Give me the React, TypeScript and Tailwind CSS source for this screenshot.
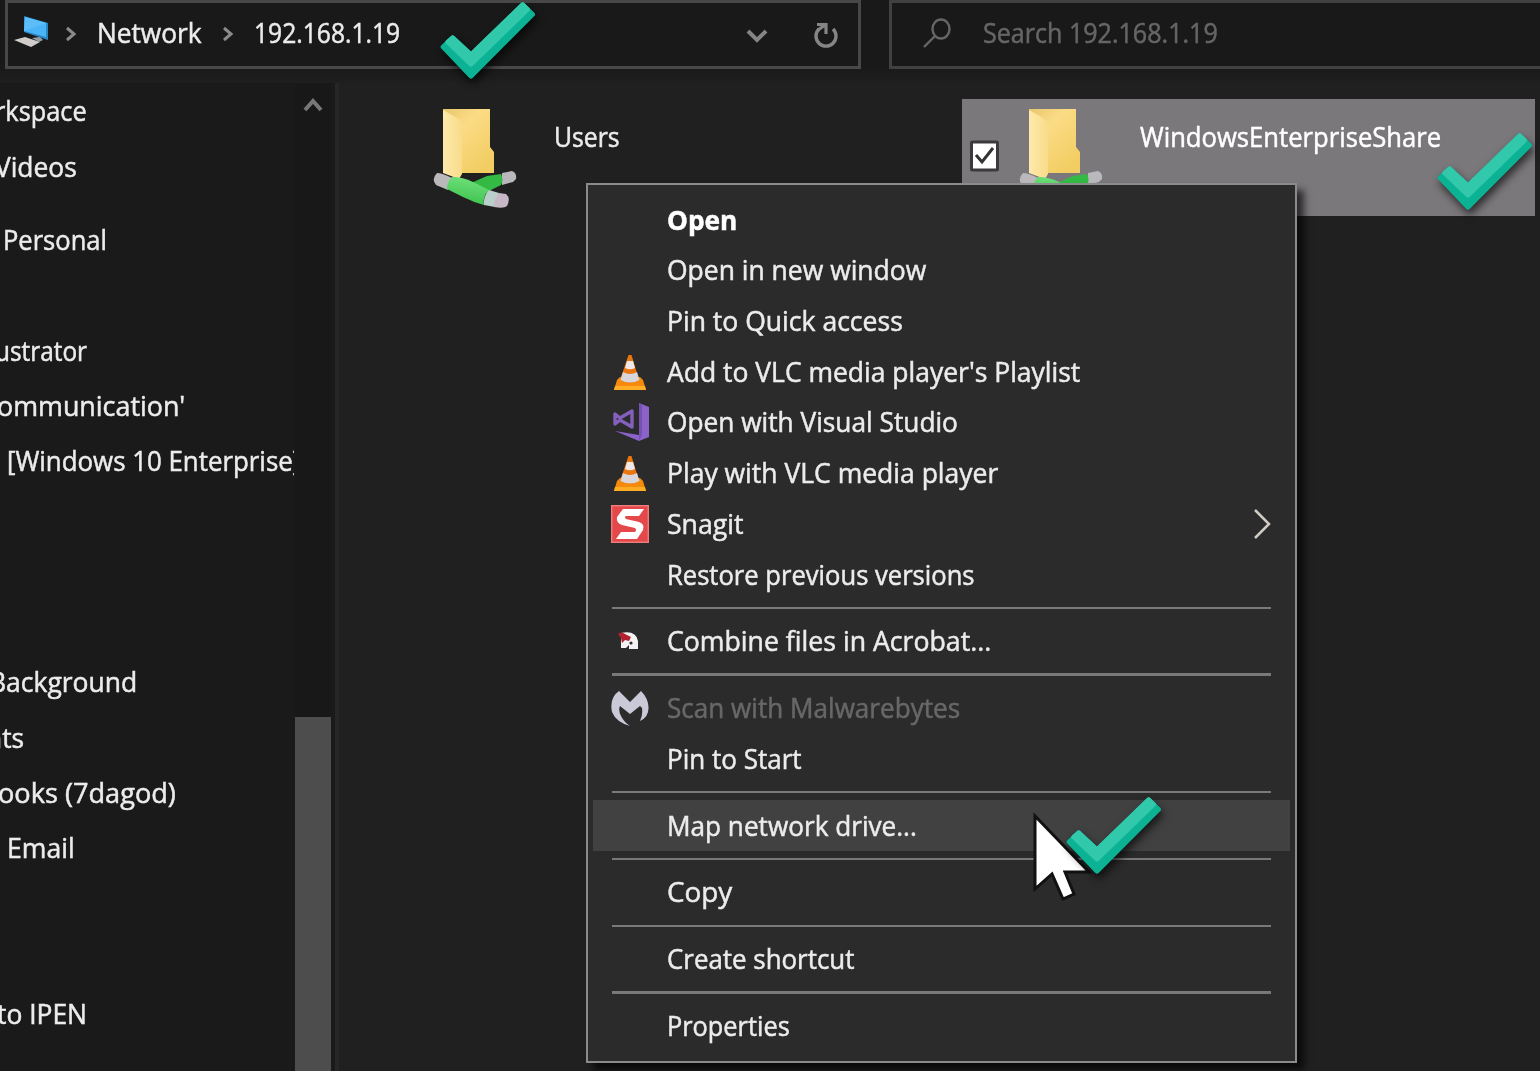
import { useId, useLayoutEffect, useRef, useState, type ReactNode } from "react";

/* Condenses a line of text horizontally so that it fills the given width. */
function Fit({ w, className = "", children }: { w: number; className?: string; children: ReactNode }) {
  const ref = useRef<HTMLSpanElement>(null);
  const [scale, setScale] = useState(1);
  useLayoutEffect(() => {
    if (ref.current) setScale(w / ref.current.offsetWidth);
  }, [w]);
  return (
    <span className={`block shrink-0 ${className}`} style={{ width: w }}>
      <span ref={ref} className="inline-block origin-left whitespace-pre" style={{ transform: `scaleX(${scale})` }}>
        {children}
      </span>
    </span>
  );
}

function CheckMark({ className }: { className: string }) {
  return (
    <svg viewBox="54 0 300 246" className={`absolute h-[82px] w-[100px] overflow-visible drop-shadow-[2px_5px_4px_rgba(0,0,0,0.65)] ${className}`}>
      <path d="M69 141 98 113 153 164 308 14 338 43 153 229Z" fill="#0cb294" stroke="#0cb294" strokeWidth="14" strokeLinejoin="round" />
      <path d="M83 126 98 113 153 164 308 14 323 28 153 193Z" fill="#31c8ab" stroke="#31c8ab" strokeWidth="14" strokeLinejoin="round" />
    </svg>
  );
}

function FolderIcon() {
  const id = useId();
  return (
    <svg viewBox="0 0 84 102" className="h-[102px] w-[84px] shrink-0">
      <defs>
        <linearGradient id={`${id}b`} x1="0" y1="0" x2="0.7" y2="1">
          <stop offset="0" stopColor="#e8c56c" />
          <stop offset="0.35" stopColor="#fbdc86" />
          <stop offset="1" stopColor="#f2cd62" />
        </linearGradient>
        <linearGradient id={`${id}f`} x1="0" y1="0" x2="1" y2="0">
          <stop offset="0" stopColor="#ffe9ab" />
          <stop offset="1" stopColor="#f8dc8a" />
        </linearGradient>
        <linearGradient id={`${id}g`} x1="0.6" y1="0" x2="0.4" y2="1">
          <stop offset="0" stopColor="#6fe07a" />
          <stop offset="1" stopColor="#3cc24d" />
        </linearGradient>
      </defs>
      <path d="M10 1H57V39L61 44V65H26L10 60Z" fill={`url(#${id}b)`} />
      <path d="M10 2 24 10Q29 13 29 18V66L26 71 10 65Z" fill={`url(#${id}f)`} />
      <path d="M69 65 79 63Q84 65 83 71L80 74 69 77Z" fill="#b9b8bc" />
      <path d="M38 75 54 68 68 66Q71 72 68 77L50 86Z" fill="#35b945" />
      <path d="M4 65Q9 65 19 70L15 82 3 77Q-2 71 4 65Z" fill="#bab8bb" />
      <path d="M19 69Q30 69 40 74L56 82Q49 89 51 97Q40 94 30 89L14 81Q14 74 19 69Z" fill={`url(#${id}g)`} />
      <path d="M56 82 66 85 62 99 51 97Q50 88 56 82Z" fill="#b8cfca" />
      <path d="M66 85 73 86Q78 90 74 98Q71 101 61 99Q61 90 66 85Z" fill="#c6b9c5" />
    </svg>
  );
}

function Cone() {
  return (
    <svg viewBox="0 0 36 38" className="h-[38px] w-9">
      <path d="M5 27 8 24H28L31 27 34 37H2Z" fill="#f58a0c" />
      <path d="M3 33H33L34 37H2Z" fill="#ffad25" />
      <path d="M16.500 2H19.500L27 27Q18 33 8 27Z" fill="#ea760d" />
      <path d="M15 8H21L23 15Q18 17.500 13 15Z" fill="#f0e9e8" />
      <path d="M11 19Q18 23 25 19L27.500 27Q18 32 8.500 27Z" fill="#d9d6db" />
    </svg>
  );
}

function VisualStudio() {
  return (
    <svg viewBox="0 0 38 40" className="h-10 w-[38px]">
      <path d="M28 1 38 5V35L28 39 4 29 28 33Z" fill="#8a62c8" />
      <path d="M28 1 31 3V33L28 39Z" fill="#7650b5" />
      <path d="M4 12 9 16 21 9V25L9 18 4 22Z" fill="none" stroke="#8460bd" strokeWidth="3.4" strokeLinejoin="round" />
    </svg>
  );
}

function SnagitIcon() {
  return (
    <svg viewBox="0 0 38 38" className="h-[38px] w-[38px]">
      <rect width="38" height="38" fill="#e5484a" />
      <rect x="0.7" y="0.7" width="36.6" height="36.6" fill="none" stroke="#ee7d7b" strokeWidth="1.4" />
      <path d="M12 4H33L28 11H15Q13 12 15 14L28 17Q34 19 32 25L26 34H5L10 27H24Q26 25 24 23L11 20Q5 18 6 12Z" fill="#fff" />
    </svg>
  );
}

function AcrobatIcon() {
  return (
    <svg viewBox="0 0 22 20" className="mr-[4px] h-5 w-[22px]">
      <path d="M4 2Q19 -1 21 10V18H12V14L9 17H4Z" fill="#f4f2f3" />
      <path d="M1 3Q4 0 8 3L14 6 12 10 8 9 5 12 4 7Z" fill="#b3202f" />
      <circle cx="14" cy="12" r="1.6" fill="#302c2e" />
    </svg>
  );
}

function Malwarebytes() {
  return (
    <svg viewBox="0 0 38 36" className="h-9 w-[38px]">
      <path d="M8 1 19 12 30 1Q37 8 37.500 17Q38 27 29 31Q32 25 31 18L29 16 19 24 9 16Q7 20 10 26Q13 32 19 36Q5 32 1 22Q-2 8 8 1Z" fill="#cac9d8" />
    </svg>
  );
}

function ComputerIcon() {
  return (
    <svg viewBox="0 0 36 34" className="h-[34px] w-9 shrink-0">
      <path d="M0 25 11 22 26 27 17 32Z" fill="#cfccca" />
      <path d="M18 23 26 22 29 25 25 27Z" fill="#929da5" />
      <path d="M10 1 34 8V25L10 17Z" fill="#2b87c4" />
      <path d="M11 2 32 8V22L10 16Z" fill="#49b5f7" />
      <path d="M11 2 32 8 10 16Z" fill="#5cbdf9" />
    </svg>
  );
}

type Entry = { label: string; w: number; icon?: ReactNode; bold?: boolean; muted?: boolean; active?: boolean; sub?: boolean };

const groups: Entry[][] = [
  [
    { label: "Open", w: 70, bold: true },
    { label: "Open in new window", w: 259 },
    { label: "Pin to Quick access", w: 236 },
    { label: "Add to VLC media player's Playlist", w: 413, icon: <Cone /> },
    { label: "Open with Visual Studio", w: 291, icon: <VisualStudio /> },
    { label: "Play with VLC media player", w: 331, icon: <Cone /> },
    { label: "Snagit", w: 76, icon: <SnagitIcon />, sub: true },
    { label: "Restore previous versions", w: 308 },
  ],
  [{ label: "Combine files in Acrobat...", w: 324, icon: <AcrobatIcon /> }],
  [
    { label: "Scan with Malwarebytes", w: 293, icon: <Malwarebytes />, muted: true },
    { label: "Pin to Start", w: 135 },
  ],
  [{ label: "Map network drive...", w: 250, active: true }],
  [{ label: "Copy", w: 65 }],
  [{ label: "Create shortcut", w: 187 }],
  [{ label: "Properties", w: 123 }],
];

function ContextMenu() {
  return (
    <div className="absolute left-[586px] top-[183px] h-[880px] w-[711px] border-2 border-[#8b8b8b] bg-[#2b2b2b] px-[5px] pt-[9.4px] shadow-[7px_7px_7px_rgba(0,0,0,0.65)]">
      {groups.map((group, g) => (
        <div key={g}>
          {g > 0 && (
            <div className="flex h-[16.1px] items-center px-[19px]">
              <div className="h-[2.5px] w-full bg-[#797979]" />
            </div>
          )}
          {group.map((e) => (
            <div key={e.label} className={`flex h-[50.7px] items-center ${e.active ? "bg-[#414141]" : ""}`}>
              <div className="flex w-[74px] shrink-0 justify-center">{e.icon}</div>
              <Fit w={e.w} className={e.bold ? "font-bold text-white" : e.muted ? "text-[#686868]" : ""}>
                {e.label}
              </Fit>
              {e.sub && (
                <svg viewBox="0 0 20 32" className="ml-auto mr-[17px] h-8 w-5">
                  <path d="M2 2 16 16 2 30" fill="none" stroke="#d0cdc4" strokeWidth="2.5" />
                </svg>
              )}
            </div>
          ))}
        </div>
      ))}
    </div>
  );
}

/* Tree rows; x is the start of the text, which may be scrolled past the left edge. */
const tree: { label?: string; x?: number; w?: number; gap?: boolean }[] = [
  { label: "rkspace", x: -5, w: 92 },
  { label: "Videos", x: -5, w: 82, gap: true },
  { label: "Personal", x: 3, w: 104 },
  {},
  { label: "ustrator", x: -5, w: 92 },
  { label: "ommunication'", x: -3, w: 188 },
  { label: "[Windows 10 Enterprise]", x: 7, w: 294 },
  {},
  {},
  {},
  { label: "Background", x: -11, w: 148 },
  { label: "nts", x: -14, w: 38 },
  { label: "ooks (7dagod)", x: -2, w: 178 },
  { label: "Email", x: 7, w: 68 },
  {},
  {},
  { label: "to IPEN", x: -3, w: 90 },
];

function Sidebar() {
  return (
    <aside className="flex w-[339px] shrink-0 bg-[#1a1a1a]">
      <div className="w-[294px] shrink-0 overflow-hidden pt-[0.7px]">
        {tree.map((r, i) => (
          <div key={i} className={`flex h-[55.3px] items-center ${r.gap ? "mb-[18px]" : ""}`}>
            {r.label && (
              <div style={{ marginLeft: r.x }}>
                <Fit w={r.w!}>{r.label}</Fit>
              </div>
            )}
          </div>
        ))}
      </div>
      <div className="ml-px flex w-[36px] flex-col items-center bg-[#181818] pt-[13px]">
        <svg viewBox="0 0 20 18" className="h-[18px] w-5 shrink-0">
          <path d="M2 14 10 5 18 14" fill="none" stroke="#777" strokeWidth="4" />
        </svg>
        <div className="mt-[603px] w-full flex-1 bg-[#4d4d4d]" />
      </div>
      <div className="ml-auto w-[4px] bg-[#262626]" />
    </aside>
  );
}

function Crumb() {
  return (
    <svg viewBox="0 0 12 16" className="h-4 w-3 shrink-0">
      <path d="M2 2 9 8 2 14" fill="none" stroke="#8b8b8b" strokeWidth="3" />
    </svg>
  );
}

export default function App() {
  return (
    <div className="relative h-[1071px] w-[1540px] overflow-hidden bg-[#202020] font-['Open_Sans','Noto_Sans',sans-serif] text-[27px] font-medium leading-9 text-[#ececec] [-webkit-text-stroke:0.5px]">
      <header className="flex h-[83px] bg-linear-to-b from-[#191919] from-80% to-[#1f1f1f] pl-[5px]">
        <div className="flex h-[69px] w-[856px] shrink-0 items-center border-[3px] border-[#484848] bg-[#191919] pb-[3px] pl-[6px]">
          <div className="-mt-[3px]"><ComputerIcon /></div>
          <div className="ml-[15px] mt-[2px] flex"><Crumb /></div>
          <Fit w={105} className="ml-[20px]">Network</Fit>
          <div className="ml-[20px] mt-[2px] flex"><Crumb /></div>
          <Fit w={146} className="ml-[20px]">192.168.1.19</Fit>
          <svg viewBox="0 0 24 18" className="ml-auto mt-[5px] h-[18px] w-6">
            <path d="M4 4 13 13 22 4" fill="none" stroke="#858585" strokeWidth="4" />
          </svg>
          <svg viewBox="0 0 26 28" className="ml-[45px] mr-[19px] mt-[3px] h-7 w-[26px]">
            <path d="M20 8A10 10 0 1 1 6 8" fill="none" stroke="#858585" strokeWidth="3.4" />
            <path d="M4 3.500H13V13M5 9 12 4" fill="none" stroke="#858585" strokeWidth="3.2" />
          </svg>
        </div>
        <div className="ml-[28px] flex h-[69px] w-[656px] shrink-0 items-center border-[3px] border-[#414141] bg-[#191919] pb-[3px]">
          <svg viewBox="0 0 30 32" className="ml-[30px] h-8 w-[30px]">
            <ellipse cx="19" cy="12" rx="8.500" ry="9.500" fill="none" stroke="#666" strokeWidth="2.4" />
            <path d="M13 19 2 30" stroke="#666" strokeWidth="2.4" />
          </svg>
          <Fit w={235} className="ml-[31px] text-[#666]">Search 192.168.1.19</Fit>
        </div>
      </header>

      <div className="flex h-[988px]">
        <Sidebar />
        <main className="flex flex-1 items-start pl-[94px] pt-[16px]">
          <div className="flex w-[529px] pt-[9px]">
            <FolderIcon />
            <Fit w={66} className="ml-[37px] mt-[11px]">Users</Fit>
          </div>
          <div className="flex h-[117px] w-[573px] shrink-0 items-start bg-[#7b787c] pt-[9px]">
            <svg viewBox="0 0 30 32" className="ml-[8px] mt-[32px] h-8 w-[30px]">
              <rect x="1.500" y="2" width="26" height="28" rx="1" fill="#fff" stroke="#3a393c" strokeWidth="3" />
              <path d="M6 15 12 22 23 8" fill="none" stroke="#333" strokeWidth="3" />
            </svg>
            <div className="ml-[19px]"><FolderIcon /></div>
            <Fit w={301} className="ml-[37px] mt-[11px] text-white">WindowsEnterpriseShare</Fit>
          </div>
        </main>
      </div>

      <ContextMenu />
      <svg viewBox="0 0 60 90" className="absolute left-[1032px] top-[812px] h-[90px] w-[60px] overflow-visible">
        <path d="M3 4V77L20 62 31 87 42 82 33 60H57Z" fill="#fff" stroke="#111" strokeWidth="3" />
      </svg>
      <CheckMark className="left-[438px] top-0" />
      <CheckMark className="left-[1435px] top-[131px]" />
      <CheckMark className="left-[1064px] top-[795px]" />
    </div>
  );
}
